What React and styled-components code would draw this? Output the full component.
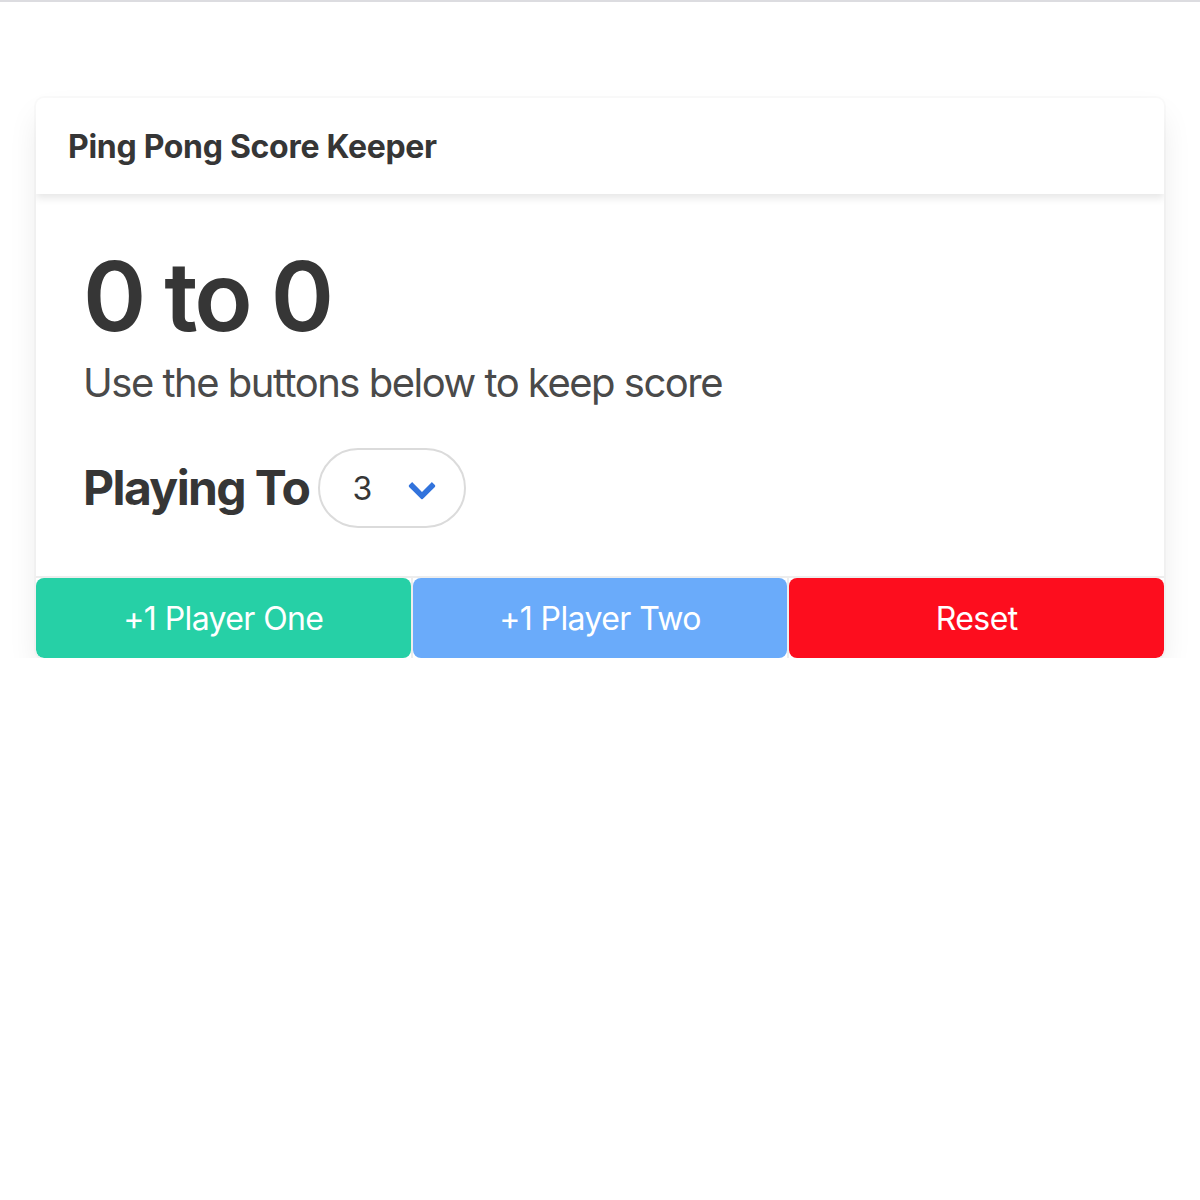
import React, { useState } from "react";
import styled, { createGlobalStyle } from "styled-components";

const GlobalStyle = createGlobalStyle`
  html, body {
    margin: 0;
    padding: 0;
    background: #ffffff;
  }
  body {
    font-family: Inter, "Noto Sans", "Liberation Sans", sans-serif;
    color: #4a4a4a;
    border-top: 2px solid #dcdce0;
  }
  * {
    box-sizing: border-box;
  }
`;

const Page = styled.div`
  padding: 96px 36px 0;
`;

const Card = styled.div`
  background: #ffffff;
  border-radius: 8px;
  box-shadow: 0 16px 32px -4px rgba(10, 10, 10, 0.1),
    0 0 0 2px rgba(10, 10, 10, 0.02);
  overflow: hidden;
`;

const CardHeader = styled.header`
  display: flex;
  align-items: center;
  padding: 25px 32px 23px;
  box-shadow: 0 4px 8px rgba(10, 10, 10, 0.1);
  position: relative;
`;

const HeaderTitle = styled.p`
  margin: 0;
  font-size: 32px;
  line-height: 48px;
  font-weight: 700;
  letter-spacing: -0.3px;
  color: #363636;
`;

const CardContent = styled.div`
  padding: 48px 48px 48px 47px;
`;

const Score = styled.h1`
  margin: 0 0 48px;
  font-size: 96px;
  line-height: 1.125;
  font-weight: 600;
  letter-spacing: -3.1px;
  color: #363636;
`;

const Subtitle = styled.p`
  margin: -40px 0 40px;
  font-size: 40px;
  line-height: 1.25;
  font-weight: 400;
  letter-spacing: -1.5px;
  color: #4a4a4a;
`;

const LimitRow = styled.div`
  display: flex;
  align-items: center;
  gap: 9px;
`;

const LimitLabel = styled.h3`
  margin: 0;
  font-size: 48px;
  line-height: 1.125;
  font-weight: 700;
  letter-spacing: -1.6px;
  color: #363636;
`;

const SelectWrap = styled.div`
  position: relative;
  height: 80px;

  &::after {
    content: "";
    position: absolute;
    top: 50%;
    right: 34px;
    width: 14px;
    height: 14px;
    margin-top: -12px;
    border: 6px solid #3273dc;
    border-top: 0;
    border-right: 0;
    border-radius: 2px;
    transform: rotate(-45deg);
    pointer-events: none;
  }
`;

const Select = styled.select`
  appearance: none;
  width: 148px;
  height: 80px;
  padding: 0 80px 0 32px;
  border: 2px solid #dbdbdb;
  border-radius: 9999px;
  background: #ffffff;
  font-family: inherit;
  font-size: 32px;
  color: #363636;
  outline: none;
`;

const CardFooter = styled.footer`
  display: flex;
  border-top: 2px solid #ededed;
`;

const FooterItem = styled.div`
  flex: 1 1 0;
  display: flex;
  &:not(:last-child) {
    border-right: 2px solid #ededed;
  }
`;

const ScoreButton = styled.button`
  flex: 1;
  height: 80px;
  border: 0;
  border-radius: 8px;
  background: ${(props) => props.color};
  color: #ffffff;
  font-family: inherit;
  font-size: 32px;
  font-weight: 400;
  letter-spacing: -0.6px;
  cursor: pointer;
`;

const App = () => {
  const [p1, setP1] = useState(0);
  const [p2, setP2] = useState(0);
  const [limit, setLimit] = useState(3);

  const reset = () => {
    setP1(0);
    setP2(0);
  };

  return (
    <>
      <GlobalStyle />
      <Page>
        <Card>
          <CardHeader>
            <HeaderTitle>Ping Pong Score Keeper</HeaderTitle>
          </CardHeader>
          <CardContent>
            <Score>
              {p1} to {p2}
            </Score>
            <Subtitle>Use the buttons below to keep score</Subtitle>
            <LimitRow>
              <LimitLabel>Playing To</LimitLabel>
              <SelectWrap>
                <Select
                  value={limit}
                  onChange={(e) => setLimit(Number(e.target.value))}
                >
                  {[3, 4, 5, 6, 7, 8, 9, 10, 11].map((n) => (
                    <option key={n} value={n}>
                      {n}
                    </option>
                  ))}
                </Select>
              </SelectWrap>
            </LimitRow>
          </CardContent>
          <CardFooter>
            <FooterItem>
              <ScoreButton color="#26d0a6" onClick={() => setP1(p1 + 1)}>
                +1 Player One
              </ScoreButton>
            </FooterItem>
            <FooterItem>
              <ScoreButton color="#6aabfa" onClick={() => setP2(p2 + 1)}>
                +1 Player Two
              </ScoreButton>
            </FooterItem>
            <FooterItem>
              <ScoreButton color="#fd0d1e" onClick={reset}>
                Reset
              </ScoreButton>
            </FooterItem>
          </CardFooter>
        </Card>
      </Page>
    </>
  );
};

export default App;
